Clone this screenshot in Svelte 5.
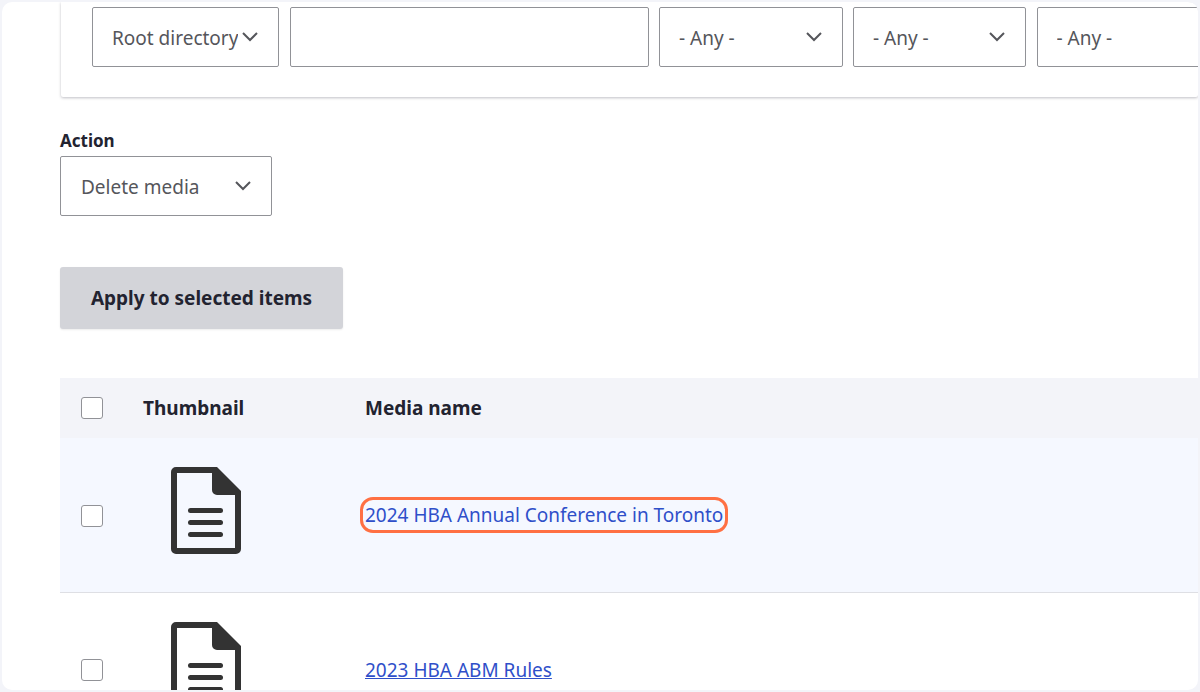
<script>
  const filters = [
    { label: 'Root directory', width: 187, options: ['Root directory'] },
    { label: 'name', width: 359 },
    { label: '- Any -', width: 183.5, options: ['- Any -'] },
    { label: '- Any -', width: 173, options: ['- Any -'] },
    { label: '- Any -', width: 200, options: ['- Any -'], bare: true }
  ];

  const rows = [
    { name: '2024 HBA Annual Conference in Toronto', marked: true },
    { name: '2023 HBA ABM Rules', marked: false }
  ];
</script>

<div class="page">
  <div class="sheet">
    <div class="filters">
      {#each filters as f}
        {#if f.options}
          <select class="field" class:bare={f.bare} style="width: {f.width}px">
            {#each f.options as o}<option>{o}</option>{/each}
          </select>
        {:else}
          <input class="field text" style="width: {f.width}px" type="text" aria-label={f.label} />
        {/if}
      {/each}
    </div>

    <div class="action">
      <label for="action">Action</label>
      <select id="action" class="field">
        <option>Delete media</option>
      </select>
    </div>

    <button class="apply" type="button">Apply to selected items</button>

    <table>
      <thead>
        <tr>
          <th class="c-check"><input type="checkbox" aria-label="Select all" /></th>
          <th class="c-thumb">Thumbnail</th>
          <th>Media name</th>
        </tr>
      </thead>
      <tbody>
        {#each rows as r}
          <tr class:active={r.marked}>
            <td class="c-check"><input type="checkbox" aria-label={r.name} /></td>
            <td class="c-thumb">
              <svg class="doc" viewBox="0 0 70 87" width="70" height="87" aria-hidden="true">
                <path
                  fill="#333"
                  fill-rule="evenodd"
                  d="M5 0H46L70 24V82A5 5 0 0 1 65 87H5A5 5 0 0 1 0 82V5A5 5 0 0 1 5 0ZM6 6V81H64V28H46A5 5 0 0 1 41 23V6Z"
                />
                <rect x="17" y="41" width="35" height="5" rx="2.5" fill="#333" />
                <rect x="17" y="53" width="35" height="5" rx="2.5" fill="#333" />
                <rect x="17" y="65" width="35" height="5" rx="2.5" fill="#333" />
              </svg>
            </td>
            <td class="c-name"><a href="#media" class:marked={r.marked}>{r.name}</a></td>
          </tr>
        {/each}
      </tbody>
    </table>
  </div>
</div>

<style>
  :global(body) {
    margin: 0;
    background: #f3f4f9;
  }
  .page {
    width: 1200px;
    height: 692px;
    box-sizing: border-box;
    padding: 2px;
    overflow: hidden;
    background: #f3f4f9;
    font-family: 'Noto Sans', 'Open Sans', sans-serif;
    color: #222330;
  }
  .sheet {
    height: 100%;
    box-sizing: border-box;
    padding-left: 58px;
    background: #fff;
    border-radius: 10px;
    overflow: hidden;
  }
  .filters {
    display: flex;
    gap: 10.5px;
    height: 95px;
    box-sizing: border-box;
    margin-left: 1px;
    padding: 5px 0 0 31px;
    background: #fff;
    border-radius: 0 0 2px 2px;
    box-shadow: 0 1px 3px rgba(30, 30, 50, 0.28);
  }
  .field {
    flex: none;
    height: 60px;
    box-sizing: border-box;
    border: 1px solid #919297;
    border-radius: 2px;
    padding: 2px 40px 0 20px;
    font-family: inherit;
    font-size: 19px;
    color: #55565b;
    appearance: none;
    background: #fff url("data:image/svg+xml,%3Csvg xmlns='http://www.w3.org/2000/svg' width='16' height='10' viewBox='0 0 16 10'%3E%3Cpath d='M1 1l7 7 7-7' fill='none' stroke='%2355565b' stroke-width='2'/%3E%3C/svg%3E") no-repeat right 20px top 24px;
  }
  .filters .field {
    padding-left: 19px;
  }
  .field.text {
    background-image: none;
  }
  .field.bare {
    background-image: none;
  }
  .action {
    display: flex;
    flex-direction: column;
    align-items: flex-start;
    margin-top: 33px;
  }
  .action label {
    margin-bottom: 4px;
    font-size: 17px;
    line-height: 22px;
    font-weight: 700;
    color: #222330;
  }
  .action .field {
    width: 212px;
  }
  .apply {
    display: block;
    width: 283px;
    height: 62px;
    margin-top: 51px;
    padding: 0;
    border: 0;
    border-radius: 3px;
    background: #d3d4d9;
    box-shadow: 0 1px 2px rgba(0, 0, 0, 0.08);
    font-family: inherit;
    font-size: 19px;
    font-weight: 700;
    color: #222330;
  }
  table {
    width: 1200px;
    margin-top: 49px;
    border-collapse: collapse;
    table-layout: fixed;
  }
  thead tr {
    height: 60px;
    background: #f3f4f9;
  }
  th {
    padding: 0;
    text-align: left;
    font-size: 19px;
    font-weight: 700;
  }
  tbody tr {
    height: 154px;
    border-bottom: 1px solid #dedfe4;
  }
  tr.active {
    background: #f5f8ff;
  }
  td {
    padding: 0;
    font-size: 19px;
  }
  .c-check {
    width: 83px;
  }
  .c-thumb {
    width: 222px;
  }
  td.c-thumb {
    padding-bottom: 8px;
    line-height: 0;
  }
  td.c-name {
    padding-top: 1px;
  }
  .doc {
    margin-left: 28px;
  }
  input[type='checkbox'] {
    display: block;
    width: 22px;
    height: 22px;
    margin: 0 0 0 21px;
    appearance: none;
    background: #fff;
    border: 1px solid #919297;
    border-radius: 3px;
  }
  td input[type='checkbox'] {
    margin-top: 2px;
  }
  a {
    color: #2f4fc9;
    text-decoration: underline;
  }
  a.marked {
    text-decoration: none;
    border-radius: 8px;
    outline: 3px solid #ff7043;
    outline-offset: 2px;
  }
</style>
